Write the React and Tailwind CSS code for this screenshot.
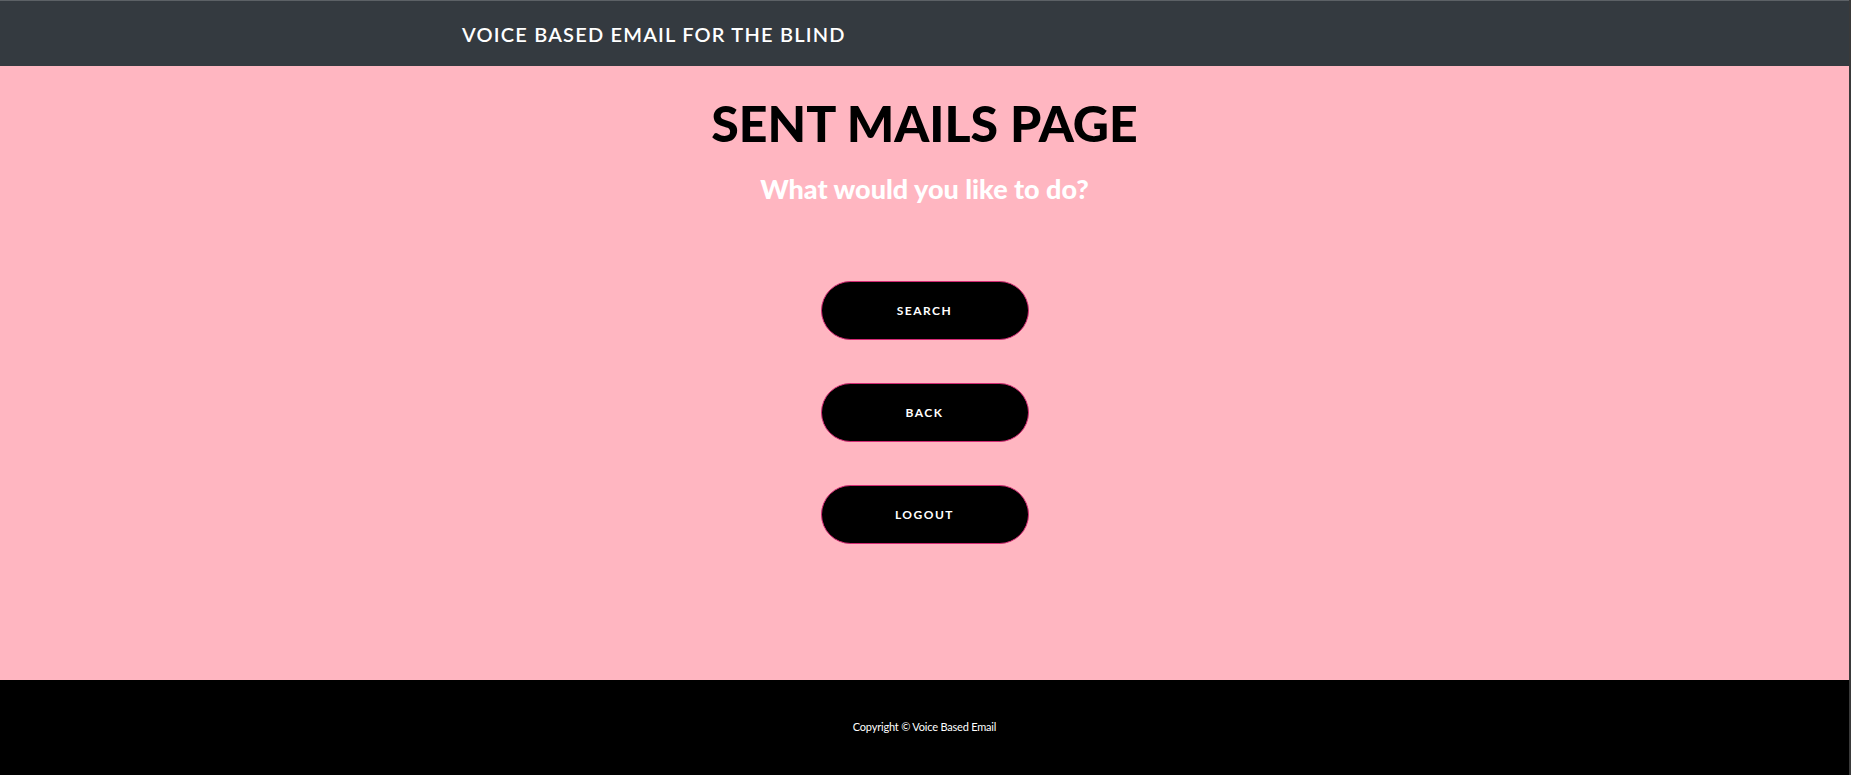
import React from 'react';

const buttons = ['SEARCH', 'BACK', 'LOGOUT'];

const App = () => {
  return (
    <div className="flex w-full h-[775px] overflow-hidden bg-[#3a3a3a]" style={{ fontFamily: 'Lato, "Open Sans", sans-serif' }}>
      <div className="flex-1 flex flex-col">
        {/* Navbar */}
        <header className="h-[66px] bg-[#343a40] border-t border-[#5c6166] flex items-center">
          <div className="pl-[462px] text-white text-[20px] font-semibold tracking-[1.2px] leading-none">
            VOICE BASED EMAIL FOR THE BLIND
          </div>
        </header>

        {/* Main */}
        <main className="h-[614px] bg-[#ffb6c1] flex flex-col items-center pt-[28px]">
          <h1 className="text-[50px] leading-[58px] font-black text-black">SENT MAILS PAGE</h1>
          <h3 className="mt-[22px] text-[27px] leading-[30px] font-black text-white">What would you like to do?</h3>
          <div className="mt-[77px] flex flex-col gap-[43px]">
            {buttons.map((b) => (
              <button
                key={b}
                className="w-[208px] h-[59px] rounded-full bg-black border border-[#d42a74] text-white text-[12px] font-bold tracking-[1.5px]"
              >
                {b}
              </button>
            ))}
          </div>
        </main>

        {/* Footer */}
        <footer className="flex-1 bg-black flex items-center justify-center">
          <p className="text-white text-[11px] tracking-[-0.2px]">Copyright © Voice Based Email</p>
        </footer>
      </div>
      <div className="w-[2px] bg-[#3a3a3a]" />
    </div>
  );
};

export default App;
